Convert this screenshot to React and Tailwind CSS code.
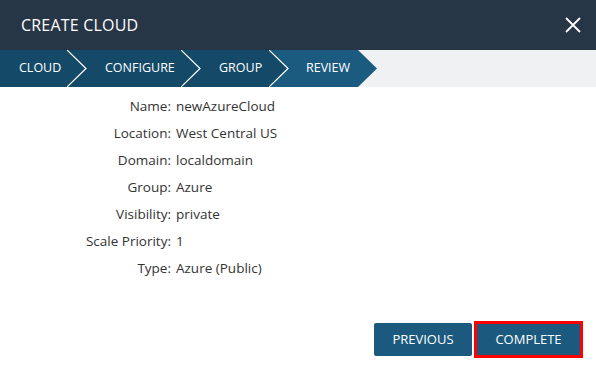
import React from "react";

const rows = [
  ["Name:", "newAzureCloud"],
  ["Location:", "West Central US"],
  ["Domain:", "localdomain"],
  ["Group:", "Azure"],
  ["Visibility:", "private"],
  ["Scale Priority:", "1"],
  ["Type:", "Azure (Public)"],
];

function Chevron({ last }) {
  return (
    <svg width="20" height="37" viewBox="0 0 20 37" className="block shrink-0">
      {last ? (
        <>
          <polygon points="0,0 19,18.5 0,37" fill="#144a68" />
          <polygon points="0,0 20,0 20,37 0,37 19,18.5" fill="#1b5b80" />
        </>
      ) : (
        <rect x="0" y="0" width="20" height="37" fill="#144a68" />
      )}
      <polyline points="0,0 19,18.5 0,37" fill="none" stroke="#ffffff" strokeWidth="1.2" />
    </svg>
  );
}

export default function App() {
  return (
    <div
      className="w-[596px] h-[370px] bg-white flex flex-col overflow-hidden"
      style={{ fontFamily: '"Open Sans", "Liberation Sans", sans-serif' }}
    >
      <div className="h-[50px] bg-[#263646] flex items-center justify-between pl-[21px] pr-[15px] shrink-0">
        <div className="text-white text-[16px] font-medium tracking-[0.2px]">CREATE CLOUD</div>
        <svg width="16" height="16" viewBox="0 0 16 16" className="block">
          <path d="M1 1 L15 15 M15 1 L1 15" stroke="#ffffff" strokeWidth="1.8" />
        </svg>
      </div>
      <div className="h-[37px] bg-[#f0f1f3] flex shrink-0 text-white text-[12.5px] font-medium">
        <div className="w-[67px] shrink-0 bg-[#144a68] pl-[19px] flex items-center">CLOUD</div>
        <Chevron />
        <div className="w-[94px] shrink-0 bg-[#144a68] pl-[18px] flex items-center whitespace-nowrap">CONFIGURE</div>
        <Chevron />
        <div className="w-[68px] shrink-0 bg-[#144a68] pl-[18px] flex items-center">GROUP</div>
        <Chevron last />
        <div className="w-[69px] shrink-0 bg-[#1b5b80] pl-[17px] flex items-center">REVIEW</div>
        <svg width="20" height="37" viewBox="0 0 20 37" className="block shrink-0">
          <polygon points="0,0 19,18.5 0,37" fill="#1b5b80" />
        </svg>
      </div>
      <div className="flex-1 flex flex-col">
        <div className="grid grid-cols-[171px_1fr] gap-x-[5px] pt-[6px] text-[13.5px] text-[#333333]">
          {rows.map(([k, v]) => (
            <React.Fragment key={k}>
              <div className="h-[27px] flex items-center justify-end whitespace-nowrap">{k}</div>
              <div className="h-[27px] flex items-center whitespace-nowrap">{v}</div>
            </React.Fragment>
          ))}
        </div>
        <div className="flex-1" />
        <div className="flex justify-end items-center gap-[2px] pr-[13px] pb-[12px]">
          <button className="h-[33px] w-[98px] bg-[#1b5a7e] text-white text-[13px] font-medium rounded-[2px]">
            PREVIOUS
          </button>
          <button className="h-[37px] w-[109px] bg-[#1b5a7e] text-white text-[13px] font-medium border-[3px] border-[#ff0000]">
            COMPLETE
          </button>
        </div>
      </div>
    </div>
  );
}
